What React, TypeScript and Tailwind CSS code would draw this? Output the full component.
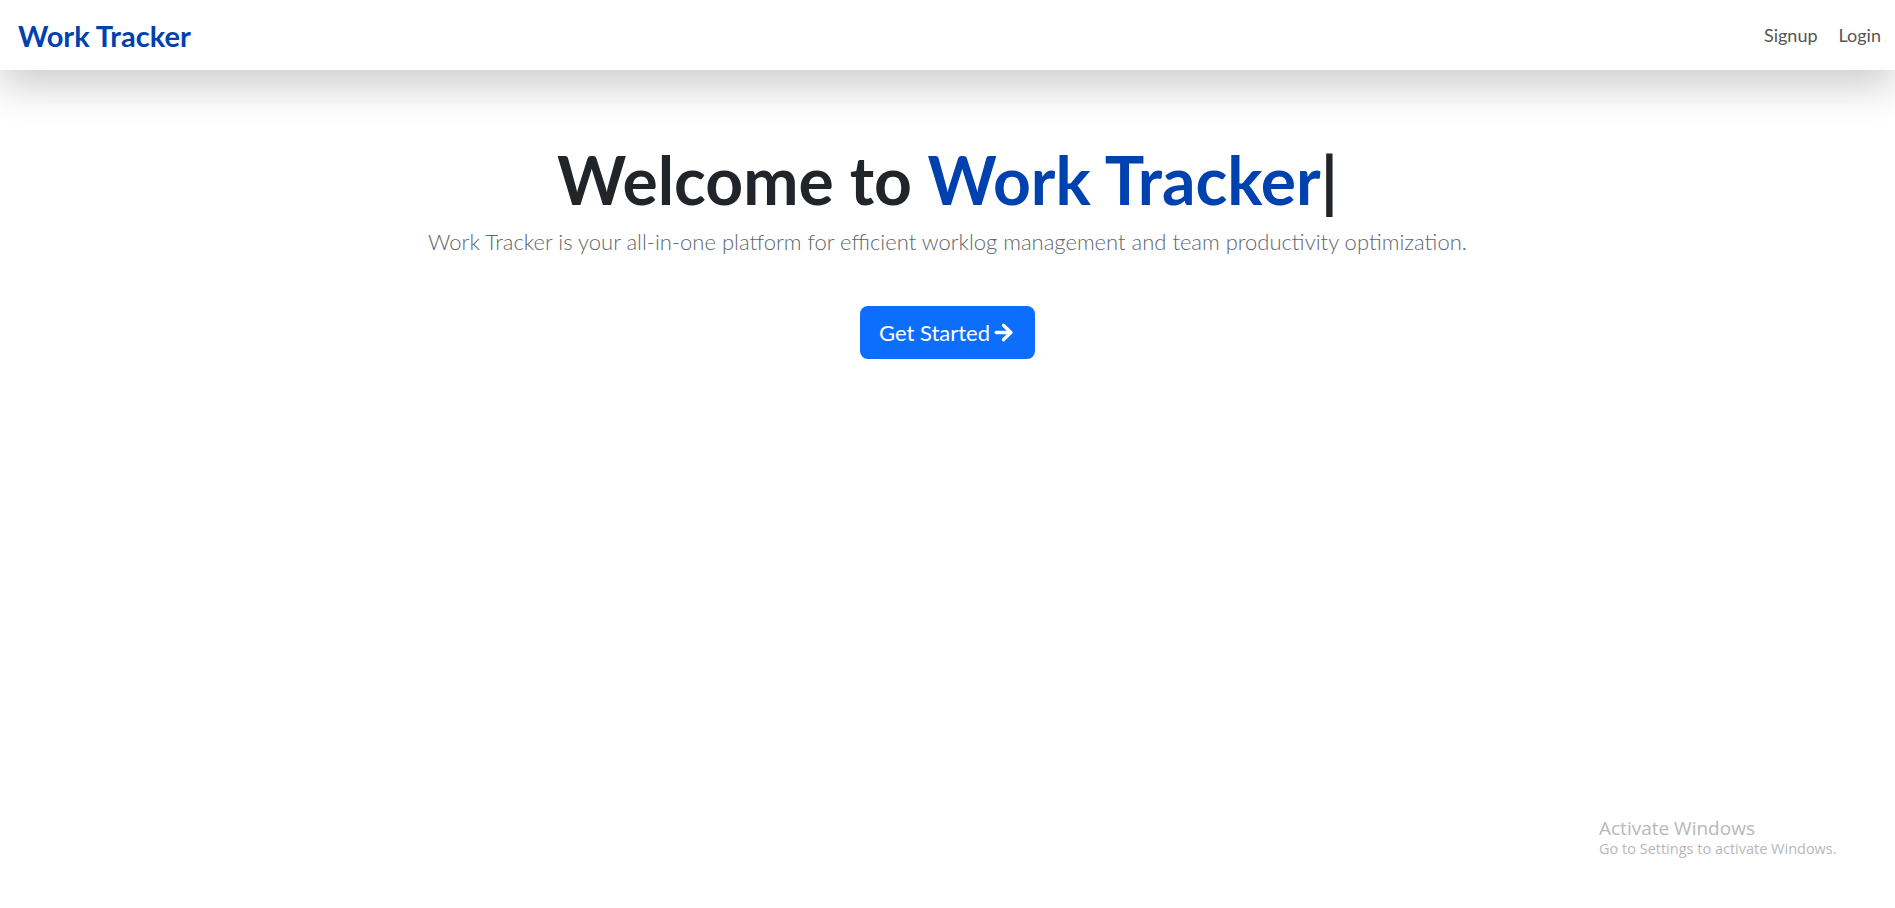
import { ArrowRight } from 'lucide-react';

export default function App() {
  return (
    <div className="min-h-screen bg-white relative font-['Lato',sans-serif]">
      {/* Navbar */}
      <nav className="h-[70px] bg-white flex items-center justify-between pl-[18px] pr-[14px] shadow-[0_16px_40px_rgba(0,0,0,0.2)] relative z-10">
        <a className="text-[29px] font-bold text-[#0041b0] leading-none">Work Tracker</a>
        <div className="flex items-center gap-[21px] text-[18px] text-[#555555]">
          <a>Signup</a>
          <a>Login</a>
        </div>
      </nav>

      {/* Hero */}
      <main className="flex flex-col items-center text-center pt-[70px]">
        <h1 className="text-[66px] font-bold leading-[1.2] text-[#212529]">
          Welcome to <span className="text-[#0041b0]">Work Tracker</span>
          <span>|</span>
        </h1>
        <p className="text-[22px] font-light text-[#5f666d] mt-[6px]">
          Work Tracker is your all-in-one platform for efficient worklog management and team productivity optimization.
        </p>
        <button className="mt-[48px] h-[53px] px-[19px] rounded-[8px] bg-[#0d6efd] text-white text-[22px] flex items-center gap-[1px]">
          Get Started
          <ArrowRight size={25} strokeWidth={3.2} />
        </button>
      </main>

      {/* Windows watermark */}
      <div className="absolute left-[1599px] top-[816px] font-['Open_Sans',sans-serif] text-[#b8b8b8]">
        <div className="text-[19px] leading-[24px]">Activate Windows</div>
        <div className="text-[14.5px] leading-[18px]">Go to Settings to activate Windows.</div>
      </div>
    </div>
  );
}
